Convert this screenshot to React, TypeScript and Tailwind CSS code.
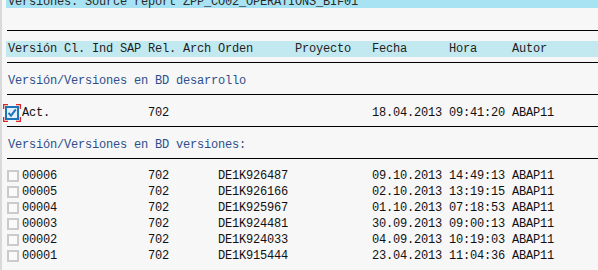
import React from "react";

const mono = { fontFamily: '"Liberation Mono", "DejaVu Sans Mono", monospace' };

function Line() {
  return <div className="ml-[5px] h-px bg-black shrink-0" />;
}

function Unchecked() {
  return (
    <div className="w-[14px] h-[16px] flex items-center shrink-0">
      <div className="w-[12px] h-[12px] -ml-[1px] border-2 border-[#cbcbcb] bg-[#fafafa]" />
    </div>
  );
}

function Checked() {
  return (
    <div className="w-[14px] h-[16px] flex items-center shrink-0">
      <svg width="18" height="18" viewBox="0 0 18 18" className="-ml-[5px] shrink-0">
        <g stroke="#e02424" strokeWidth="1.3" fill="none">
          <path d="M0.65 5 V0.65 H5" />
          <path d="M13 0.65 H17.35 V5" />
          <path d="M17.35 13 V17.35 H13" />
          <path d="M5 17.35 H0.65 V13" />
        </g>
        <rect x="3" y="3" width="12" height="12" fill="#e3f0fb" stroke="#1c74b9" strokeWidth="2" />
        <path d="M5.5 8.8 L8 11.6 L12.8 5.4" stroke="#1c74b9" strokeWidth="2" fill="none" />
      </svg>
    </div>
  );
}

type Row = { v: string; rel: string; ord: string; date: string; time: string; aut: string };

const rows: Row[] = [
  { v: "00006", rel: "702", ord: "DE1K926487", date: "09.10.2013", time: "14:49:13", aut: "ABAP11" },
  { v: "00005", rel: "702", ord: "DE1K926166", date: "02.10.2013", time: "13:19:15", aut: "ABAP11" },
  { v: "00004", rel: "702", ord: "DE1K925967", date: "01.10.2013", time: "07:18:53", aut: "ABAP11" },
  { v: "00003", rel: "702", ord: "DE1K924481", date: "30.09.2013", time: "09:00:13", aut: "ABAP11" },
  { v: "00002", rel: "702", ord: "DE1K924033", date: "04.09.2013", time: "10:19:03", aut: "ABAP11" },
  { v: "00001", rel: "702", ord: "DE1K915444", date: "23.04.2013", time: "11:04:36", aut: "ABAP11" },
];

function DataRow({ r, checked }: { r: Row; checked?: boolean }) {
  return (
    <div className="flex h-[16px] leading-[16px] pl-[6px] text-[#111] whitespace-pre shrink-0">
      {checked ? <Checked /> : <Unchecked />}
      <span className="w-[126px] shrink-0">{r.v}</span>
      <span className="w-[70px] shrink-0">{r.rel}</span>
      <span className="w-[154px] shrink-0">{r.ord}</span>
      <span className="w-[77px] shrink-0">{r.date}</span>
      <span className="w-[63px] shrink-0">{r.time}</span>
      <span>{r.aut}</span>
    </div>
  );
}

export default function App() {
  return (
    <div
      className="w-[598px] h-[270px] bg-[#f7f7f7] flex overflow-hidden text-[12px] tracking-[-0.2px]"
      style={mono}
    >
      <div className="w-[2px] bg-[#d9d9d9] shrink-0" />
      <div className="flex-1 flex flex-col">
        <div className="ml-[4px] h-[8px] bg-[#a8e3f3] overflow-hidden shrink-0">
          <div className="pl-[2px] leading-[16px] -mt-[6px] whitespace-pre text-[#2a2a2a]">
            Versiones: Source report ZPP_CO02_OPERATIONS_BIF01
          </div>
        </div>
        <div className="h-[22px] shrink-0" />
        <Line />
        <div className="h-[10px] shrink-0" />
        <div className="ml-[4px] h-[16px] bg-[#c3e9f0] pl-[2px] leading-[16px] whitespace-pre text-[#1e1e1e] shrink-0">
          {"Versión Cl. Ind SAP Rel. Arch Orden      Proyecto   Fecha      Hora     Autor"}
        </div>
        <div className="h-[5px] shrink-0" />
        <Line />
        <div className="h-[10px] shrink-0" />
        <div className="h-[16px] leading-[16px] pl-[6px] text-[#2b4f8c] whitespace-pre shrink-0">
          Versión/Versiones en BD desarrollo
        </div>
        <div className="h-[5px] shrink-0" />
        <Line />
        <div className="h-[10px] shrink-0" />
        <DataRow checked r={{ v: "Act.", rel: "702", ord: "", date: "18.04.2013", time: "09:41:20", aut: "ABAP11" }} />
        <div className="h-[5px] shrink-0" />
        <Line />
        <div className="h-[10px] shrink-0" />
        <div className="h-[16px] leading-[16px] pl-[6px] text-[#2b4f8c] whitespace-pre shrink-0">
          Versión/Versiones en BD versiones:
        </div>
        <div className="h-[5px] shrink-0" />
        <Line />
        <div className="h-[9px] shrink-0" />
        {rows.map((r) => (
          <DataRow key={r.v} r={r} />
        ))}
      </div>
    </div>
  );
}
